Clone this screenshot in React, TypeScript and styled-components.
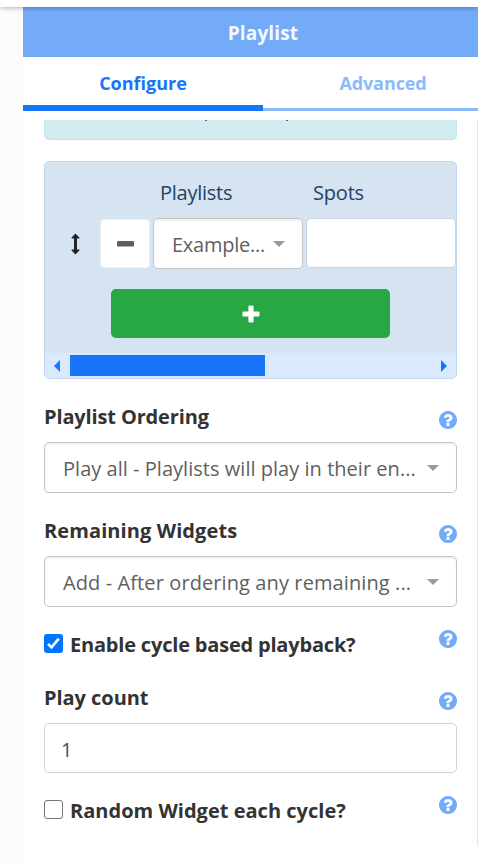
import React from "react";
import styled, { createGlobalStyle } from "styled-components";

const GlobalStyle = createGlobalStyle`
  *, *::before, *::after { box-sizing: border-box; }
  body {
    margin: 0;
    background: #fff;
    font-family: "Segoe UI", "Open Sans", "Noto Sans", sans-serif;
    color: #333;
    overflow: hidden;
  }
`;

const Page = styled.div`
  height: 864px;
  display: flex;
  flex-direction: column;
  overflow: hidden;
`;

const TopBar = styled.div`
  height: 7px;
  flex: none;
  background: #fff;
  box-shadow: 0 1px 5px rgba(0, 0, 0, 0.3);
  z-index: 1;
`;

const Workspace = styled.div`
  flex: 1;
  display: flex;
  min-height: 0;
`;

const Gutter = styled.div`
  width: 23px;
  flex: none;
  background: #fcfcfc;
`;

const Panel = styled.section`
  width: 480px;
  flex: none;
  background: #fff;
`;

const PanelHeader = styled.header`
  height: 50px;
  display: flex;
  align-items: center;
  justify-content: center;
  padding-top: 1px;
  background: #74abf9;
`;

const Text = styled.span<{ $size?: number; $spacing?: number; $bold?: boolean }>`
  font-size: ${(p) => p.$size ?? 20}px;
  letter-spacing: ${(p) => p.$spacing ?? 0}px;
  font-weight: ${(p) => (p.$bold ? 700 : 400)};
  line-height: 28px;
  white-space: nowrap;
`;

const Title = styled(Text)`
  color: #f4f8ff;
`;

const Tabs = styled.nav`
  display: flex;
  height: 54px;
`;

const Tab = styled.div<{ $active?: boolean }>`
  width: 240px;
  display: flex;
  justify-content: center;
  padding-top: 12px;
  color: ${(p) => (p.$active ? "#1775f8" : "#8bbafb")};
  border-bottom: ${(p) => (p.$active ? "6px solid #1775f8" : "3px solid #8bbafb")};
`;

const ScrollArea = styled.div`
  width: 455px;
  height: 726px;
  margin-top: 9px;
  padding: 0 20px 0 21px;
  border-right: 1px solid #dbe6fb;
  overflow: hidden;
`;

const Notice = styled.div`
  width: 413px;
  height: 20px;
  display: flex;
  justify-content: space-between;
  padding: 0 168px 0 160px;
  background: #d1ebf0;
  border: solid #bee5eb;
  border-width: 0 1px 1px;
  border-radius: 0 0 5px 5px;
`;

const Stroke = styled.i`
  width: 2px;
  height: 1px;
  background: #42737c;
`;

const PlaylistCard = styled.div`
  width: 413px;
  height: 218px;
  margin-top: 21px;
  border: 1px solid #c3d8ed;
  border-radius: 5px;
  background: #d6e3f0;
  overflow: hidden;
`;

const ColumnHeads = styled.div`
  display: grid;
  grid-template-columns: 153px 1fr;
  height: 56px;
  padding: 17px 0 0 115px;
  color: #224263;
`;

const PlaylistRow = styled.div`
  display: flex;
  height: 51px;
  align-items: flex-start;
`;

const DragHandle = styled.div`
  width: 55px;
  height: 51px;
  display: flex;
  align-items: center;
  justify-content: center;
  padding-left: 6px;
  color: #212529;
`;

const RemoveButton = styled.button`
  width: 50px;
  height: 49px;
  margin: 1px 3px 0 0;
  padding: 0;
  display: flex;
  align-items: center;
  justify-content: center;
  border: 1px solid #f0f0f0;
  border-radius: 4px;
  background: #fff;
  color: #5e5e5e;
`;

const SelectBox = styled.div<{ $width: number }>`
  width: ${(p) => p.$width}px;
  height: 51px;
  display: flex;
  align-items: center;
  justify-content: space-between;
  padding: 2px 17px 0 18px;
  border: 1px solid #c4c4c4;
  border-radius: 5px;
  background: #fff;
  box-shadow: inset 0 2px 2px rgba(0, 0, 0, 0.06);
  color: #5f5f5f;
`;

const Caret = styled.i`
  width: 0;
  height: 0;
  margin-bottom: 2px;
  border: solid transparent;
  border-width: 6px 6px 0;
  border-top-color: #999;
`;

const SpotInput = styled.div`
  width: 150px;
  height: 50px;
  margin-left: 3px;
  border: 1px solid #ced4da;
  border-radius: 5px;
  background: #fff;
`;

const AddButton = styled.button`
  display: flex;
  align-items: center;
  justify-content: center;
  width: 279px;
  height: 49px;
  margin: 20px 0 15px 66px;
  padding: 0;
  border: 0;
  border-radius: 5px;
  background: #28a745;
  color: #fff;
`;

const ScrollBar = styled.div`
  height: 25px;
  display: flex;
  align-items: center;
  padding: 0 9px;
  background: #dbe9ff;
`;

const ScrollThumb = styled.div`
  width: 195px;
  height: 21px;
  margin: 0 auto 0 10px;
  background: #1775f8;
`;

const ScrollArrow = styled.i<{ $dir: "left" | "right" }>`
  border: solid transparent;
  border-width: 6px 0;
  border-${(p) => (p.$dir === "left" ? "right" : "left")}: 6px solid #1775f8;
`;

const FieldHead = styled.div<{ $top: number; $height: number }>`
  display: flex;
  justify-content: space-between;
  width: 413px;
  height: ${(p) => p.$height}px;
  margin-top: ${(p) => p.$top}px;
`;

const HelpIcon = styled.svg<{ $drop?: number }>`
  width: 18px;
  height: 18px;
  flex: none;
  margin-top: ${(p) => p.$drop ?? 0}px;
  fill: #74abf9;
`;

const NumberInput = styled.div`
  width: 413px;
  height: 50px;
  display: flex;
  align-items: center;
  padding: 3px 16px 0;
  border: 1px solid #ced1d9;
  border-radius: 5px;
  color: #495057;
`;

const CheckLabel = styled.div`
  display: flex;
  gap: 7px;
`;

const CheckText = styled(Text)`
  margin-top: 2px;
`;

const CheckBox = styled.div<{ $checked?: boolean }>`
  width: 19px;
  height: 19px;
  margin-top: 5px;
  display: flex;
  flex: none;
  border: ${(p) => (p.$checked ? "0" : "1.5px solid #767676")};
  border-radius: 3px;
  background: ${(p) => (p.$checked ? "#0075ff" : "#fff")};
`;

const Check = () => (
  <svg width="19" height="19" viewBox="0 0 19 19" fill="none">
    <path d="M4 9.8 7.5 13.3 14.8 4.6" stroke="#fff" strokeWidth="2.6" />
  </svg>
);

const Help = ({ drop = 0 }: { drop?: number }) => (
  <HelpIcon viewBox="128 128 1536 1536" $drop={drop}>
    <path d="M1024 1376v-192q0-14-9-23t-23-9h-192q-14 0-23 9t-9 23v192q0 14 9 23t23 9h192q14 0 23-9t9-23zm256-672q0-88-55.5-163t-138.5-116-170-41q-243 0-371 213-15 24 8 42l132 100q7 6 19 6 16 0 25-12 53-68 86-92 34-24 86-24 48 0 85.5 26t37.5 59q0 38-20 61t-68 45q-63 28-115.5 86.5t-52.5 125.5v36q0 14 9 23t23 9h192q14 0 23-9t9-23q0-19 21.5-49.5t54.5-49.5q32-18 49-28.5t46-35 44.5-48 28-60.5 12.5-81zm384 192q0 209-103 385.5t-279.5 279.5-385.5 103-385.5-103-279.5-279.5-103-385.5 103-385.5 279.5-279.5 385.5-103 385.5 103 279.5 279.5 103 385.5z" />
  </HelpIcon>
);

const MoveIcon = () => (
  <svg width="9" height="22" viewBox="0 0 9 22" fill="currentColor">
    <path d="M4.5.5 8.4 4.6V5.6H6V16.4H8.4V17.4L4.5 21.5.6 17.4V16.4H3V5.6H.6V4.6Z" />
  </svg>
);

const MinusIcon = () => (
  <svg width="17" height="17" viewBox="0 0 17 17" fill="currentColor">
    <rect y="6" width="17" height="5.4" rx="1.2" />
  </svg>
);

const PlusIcon = () => (
  <svg width="18" height="18" viewBox="0 0 18 18" fill="currentColor">
    <rect x=".5" y="6.4" width="17" height="5.2" rx="1.2" />
    <rect x="6.4" y=".5" width="5.2" height="17" rx="1.2" />
  </svg>
);

export default function App() {
  return (
    <Page>
      <GlobalStyle />
      <TopBar />
      <Workspace>
        <Gutter />
        <Panel>
          <PanelHeader>
            <Title $bold $size={19} $spacing={0.15}>Playlist</Title>
          </PanelHeader>
          <Tabs>
            <Tab $active><Text $bold $size={18}>Configure</Text></Tab>
            <Tab><Text $bold $size={18} $spacing={-0.1}>Advanced</Text></Tab>
          </Tabs>
          <ScrollArea>
            <Notice><Stroke /><Stroke /></Notice>
            <PlaylistCard>
              <ColumnHeads>
                <Text $spacing={-0.25}>Playlists</Text>
                <Text $spacing={-0.2}>Spots</Text>
              </ColumnHeads>
              <PlaylistRow>
                <DragHandle><MoveIcon /></DragHandle>
                <RemoveButton><MinusIcon /></RemoveButton>
                <SelectBox $width={150}>
                  <Text $spacing={-0.25}>Example...</Text>
                  <Caret />
                </SelectBox>
                <SpotInput />
              </PlaylistRow>
              <AddButton><PlusIcon /></AddButton>
              <ScrollBar>
                <ScrollArrow $dir="left" />
                <ScrollThumb />
                <ScrollArrow $dir="right" />
              </ScrollBar>
            </PlaylistCard>

            <FieldHead $top={24} $height={39}>
              <Text $bold $spacing={-0.14}>Playlist Ordering</Text>
              <Help drop={8} />
            </FieldHead>
            <SelectBox $width={413}>
              <Text $spacing={0.03}>Play all - Playlists will play in their en...</Text>
              <Caret />
            </SelectBox>

            <FieldHead $top={24} $height={39}>
              <Text $bold $spacing={0.1}>Remaining Widgets</Text>
              <Help drop={8} />
            </FieldHead>
            <SelectBox $width={413}>
              <Text $spacing={0.1}>Add - After ordering any remaining ...</Text>
              <Caret />
            </SelectBox>

            <FieldHead $top={22} $height={32}>
              <CheckLabel>
                <CheckBox $checked><Check /></CheckBox>
                <CheckText $bold $spacing={-0.19}>Enable cycle based playback?</CheckText>
              </CheckLabel>
              <Help drop={1} />
            </FieldHead>

            <FieldHead $top={23} $height={39}>
              <Text $bold $spacing={-0.05}>Play count</Text>
              <Help drop={8} />
            </FieldHead>
            <NumberInput><Text>1</Text></NumberInput>

            <FieldHead $top={22} $height={32}>
              <CheckLabel>
                <CheckBox />
                <CheckText $bold $spacing={0.02}>Random Widget each cycle?</CheckText>
              </CheckLabel>
              <Help drop={1} />
            </FieldHead>
          </ScrollArea>
        </Panel>
      </Workspace>
    </Page>
  );
}
